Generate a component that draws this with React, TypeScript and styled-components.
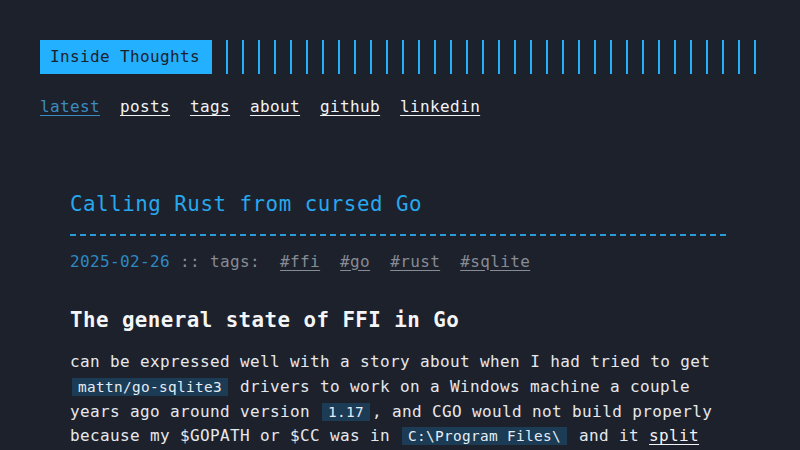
import React from "react";
import styled, { createGlobalStyle } from "styled-components";

const accent = "#23b0ff";

const Global = createGlobalStyle`
  html, body { margin: 0; padding: 0; background: #1d212c; }
  body {
    font-family: "DejaVu Sans Mono", "Liberation Mono", monospace;
    font-size: 16px;
    line-height: 1.54;
    letter-spacing: 0.37px;
    color: #e6e8ec;
  }
`;

const Container = styled.div`
  padding: 40px;
  min-height: 450px;
  box-sizing: border-box;
`;

const Header = styled.header`
  display: flex;
  flex-direction: column;
`;

const LogoRow = styled.div`
  display: flex;
  align-items: stretch;
  height: 34px;
`;

const Logo = styled.a`
  background: ${accent};
  color: #1d212c;
  padding: 0 12px 0 10px;
  display: flex;
  align-items: center;
  text-decoration: none;
`;

const Stripes = styled.div`
  flex: 1;
  margin-left: 14px;
  background: repeating-linear-gradient(
    90deg,
    ${accent} 0,
    ${accent} 2px,
    transparent 2px,
    transparent 16px
  );
`;

const Nav = styled.nav`
  display: flex;
  gap: 20px;
  margin-top: 21px;
`;

const NavLink = styled.a<{ $active?: boolean }>`
  color: ${(p) => (p.$active ? "#3a8cc0" : "#f2f3f5")};
  text-decoration: underline;
  text-underline-offset: 3px;
`;

const Post = styled.article`
  margin: 71px 30px 0;
`;

const Title = styled.h1`
  margin: 0;
  font-size: 20.8px;
  line-height: 27px;
  letter-spacing: 0.52px;
  font-weight: normal;
  color: #27a7ee;
`;

const Dashes = styled.div`
  margin-top: 16px;
  height: 2px;
  background: repeating-linear-gradient(
    90deg,
    #2a9ad8 0,
    #2a9ad8 6px,
    transparent 6px,
    transparent 10px
  );
`;

const Meta = styled.div`
  margin-top: 14px;
  color: #868b94;
`;

const DateText = styled.span`
  color: #2f89c2;
`;

const Tag = styled.a`
  margin-left: 10px;
  color: #868b94;
  text-decoration: underline;
  text-underline-offset: 3px;
`;

const H2 = styled.h2`
  margin: 33px 0 0;
  font-size: 20.8px;
  line-height: 27px;
  letter-spacing: 0.45px;
  font-weight: bold;
  color: #f4f5f7;
`;

const Para = styled.p`
  margin: 16px 0 0;
  color: #e6e8ec;
`;

const Code = styled.code`
  font-family: "DejaVu Sans Mono", "Liberation Mono", monospace;
  font-size: 14.4px;
  letter-spacing: 0.33px;
  background: #1c3b55;
  color: #e4edf5;
  padding: 1px 6px;
  margin: 0 2px;
`;

const Link = styled.a`
  color: #f2f3f5;
  text-decoration: underline;
  text-underline-offset: 3px;
`;

export default function App() {
  const nav = ["latest", "posts", "tags", "about", "github", "linkedin"];
  const tags = ["#ffi", "#go", "#rust", "#sqlite"];
  return (
    <>
      <Global />
      <Container>
        <Header>
          <LogoRow>
            <Logo href="#">Inside Thoughts</Logo>
            <Stripes />
          </LogoRow>
          <Nav>
            {nav.map((n, i) => (
              <NavLink key={n} href="#" $active={i === 0}>
                {n}
              </NavLink>
            ))}
          </Nav>
        </Header>
        <Post>
          <Title>Calling Rust from cursed Go</Title>
          <Dashes />
          <Meta>
            <DateText>2025-02-26</DateText> :: tags:
            {tags.map((t) => (
              <React.Fragment key={t}>
                {" "}
                <Tag href="#">{t}</Tag>
              </React.Fragment>
            ))}
          </Meta>
          <H2>The general state of FFI in Go</H2>
          <Para>
            can be expressed well with a story about when I had tried to get{" "}
            <Code>mattn/go-sqlite3</Code> drivers to work on a Windows machine a
            couple years ago around version <Code>1.17</Code>, and CGO would not
            build properly because my $GOPATH or $CC was in{" "}
            <Code>C:\Program Files\</Code> and it <Link href="#">split</Link>{" "}
            the path at the space between Program and Files, so the toolchain
            could not find the compiler it needed.
          </Para>
        </Post>
      </Container>
    </>
  );
}
